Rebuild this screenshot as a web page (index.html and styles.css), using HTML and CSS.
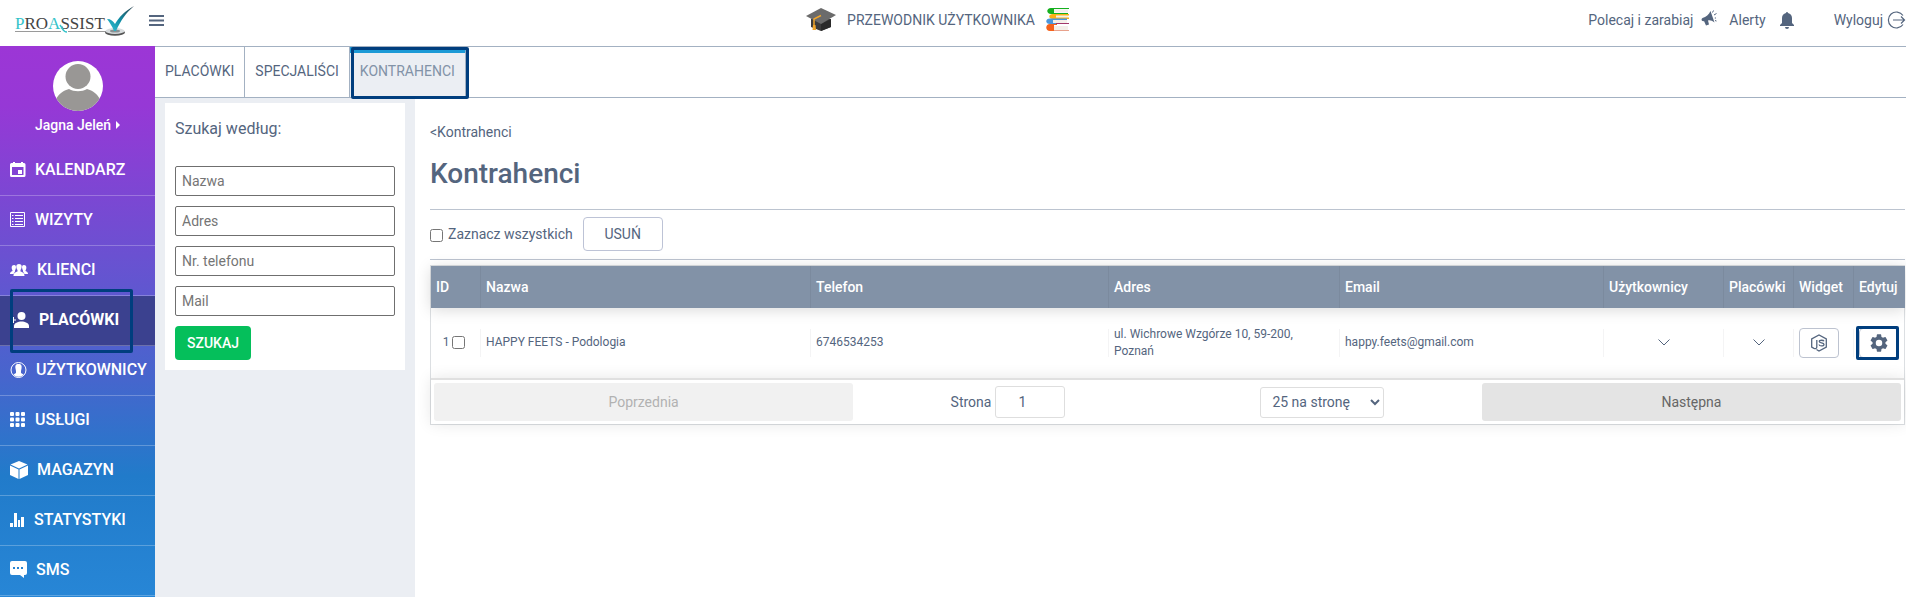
FILE: index.html
```html
<!DOCTYPE html>
<html lang="pl">
<head>
  <meta charset="UTF-8" />
  <title>ProAssist - Kontrahenci</title>
  <meta name="viewport" content="width=device-width, initial-scale=1.0" />
  <link rel="stylesheet" href="styles.css">
</head>
<body>
  <!-- Header -->
  <header class="topbar">
    <div class="topbar-left">
      <a class="logo" href="#" aria-label="ProAssist">
        <svg width="122" height="36" viewBox="0 0 122 36">
          <defs>
            <linearGradient id="check" x1="0" y1="1" x2="1" y2="0">
              <stop offset="0" stop-color="#35c3d6" />
              <stop offset="0.45" stop-color="#0f8ea6" />
              <stop offset="1" stop-color="#33424c" />
            </linearGradient>
          </defs>
          <text class="logo-text" x="3" y="26"><tspan class="logo-accent">P</tspan>RO<tspan class="logo-accent">A</tspan>SSIST</text>
          <path d="M3 28.500h46M56 28.500h38" stroke="#9a9a9a" fill="none" />
          <path d="M48 22c3 4 3 7 7 7" stroke="#35c3c9" stroke-width="1.500" fill="none" />
          <ellipse cx="103" cy="29.500" rx="10" ry="3.200" fill="#555" />
          <ellipse cx="103" cy="28" rx="9.500" ry="3" fill="#d8dcde" />
          <ellipse cx="103" cy="28" rx="5" ry="1.500" fill="#8b9194" />
          <path d="M95 16c4 0 6 2 8 5 4-7 10-13 19-18-8 7-13 14-18 25h-2c-2-5-4-8-7-12z" fill="url(#check)" />
        </svg>
      </a>
      <button class="icon-btn" type="button" aria-label="Menu">
        <svg width="16" height="12" viewBox="0 0 16 12"><path d="M0 1h15M0 5.500h15M0 10h15" stroke="#54657e" stroke-width="2" /></svg>
      </button>
    </div>

    <a class="guide" href="#">
      <svg width="30" height="24" viewBox="0 0 30 24">
        <path d="M5 11v8l10 4 10-4v-8z" fill="#3b3b3b" />
        <path d="M15 16v7l10-4v-8z" fill="#2a2a2a" />
        <path d="M15 0l15 7-15 9L0 8z" fill="#6b6b6b" />
        <path d="M15 7.500L8 11v8" stroke="#f0a52b" stroke-width="1.500" fill="none" />
        <path d="M7 17h2.500l.5 5H6.500z" fill="#f0a52b" />
      </svg>
      <span>PRZEWODNIK UŻYTKOWNIKA</span>
      <svg width="24" height="24" viewBox="0 0 24 24">
        <path d="M8 1.500h14v3H8zM10 7.500h12v2H10zM7 12h14v3H7zM8 18h14v4H8z" fill="#f4efe9" />
        <path d="M5 0h18v1H8v4h14v1H5C0 6 0 0 5 0z" fill="#15b01f" />
        <path d="M7 6h16v1.500H10v2h13V11H7C2 11 2 6 7 6z" fill="#fbb016" />
        <path d="M4 10.500h17V12H7v3h4v1H4c-5 0-5-5.500 0-5.500z" fill="#4c97dc" />
        <path d="M4 16h7v1H8v6H4c-5 0-5-7 0-7z" fill="#f5621c" />
        <path d="M10 15.500h13" stroke="#a2386b" />
        <path d="M8 22.500h15" stroke="#e8a28c" />
      </svg>
    </a>

    <nav class="topbar-right">
      <a class="top-link top-refer" href="#">Polecaj i zarabiaj
        <svg class="raised" width="16" height="17" viewBox="0 0 16 17">
          <path d="M9.500 1l4 11.500C11 10.500 9 10 7 10.500l1 4-3 1-2-4.500C1 12-.5 9 1.500 8c3.500-1.200 6.500-3 8-7z" fill="#54657e" />
          <path d="M11.500 2.500l1-2M13 5l2.500-1.500M13.800 8h1.200M14 10.500l1.500.5" stroke="#54657e" fill="none" />
        </svg>
      </a>
      <a class="top-link top-alerts" href="#">Alerty
        <svg width="16" height="17" viewBox="0 0 16 17"><path d="M7 1a1 1 0 0 1 2 0c2.500.6 4 2.500 4 5v5l2 2v1H1v-1l2-2V6c0-2.500 1.500-4.400 4-5zM6 15h4a2 2 0 0 1-4 0z" fill="#54657e" /></svg>
      </a>
      <a class="top-link top-logout" href="#">Wyloguj
        <svg width="19" height="18" viewBox="0 0 19 18"><path d="M16 4.500A8 8 0 1 0 16 13.500M6 9h12M14 5.500L17.500 9 14 12.500" fill="none" stroke="#54657e" stroke-width="1.200" /></svg>
      </a>
    </nav>
  </header>

  <div class="layout">
    <!-- Sidebar -->
    <aside class="sidebar">
      <a class="profile" href="#">
        <svg width="50" height="50" viewBox="0 0 50 50">
          <defs><clipPath id="avatar"><circle cx="25" cy="25" r="25" /></clipPath></defs>
          <g clip-path="url(#avatar)">
            <rect width="50" height="50" fill="#fff" />
            <circle cx="25" cy="15.500" r="12.500" fill="#999795" />
            <path d="M3 38c3-5 7-8.500 13-10 5 3 13 3 18 0 6 1.500 10 5 13 10v12H3z" fill="#999795" />
          </g>
        </svg>
        <span class="profile-name">Jagna Jeleń
          <svg width="4" height="8" viewBox="0 0 4 8"><path d="M0 0l4 4-4 4z" fill="#fff" /></svg>
        </span>
      </a>
      <nav class="menu">
        <a class="menu-item" href="#">
          <svg width="16" height="16" viewBox="0 0 16 16"><path fill-rule="evenodd" d="M2 1h1V0h2v1h6V0h2v1h1a1.500 1.500 0 0 1 1.500 1.500v11A1.500 1.500 0 0 1 14 15H1.500A1.500 1.500 0 0 1 0 13.500v-11A1.500 1.500 0 0 1 1.500 1zM2 5v8h11.500V5zM8 8h4v4H8z" fill="#fff" /></svg>
          <span>KALENDARZ</span>
        </a>
        <a class="menu-item" href="#">
          <svg width="16" height="16" viewBox="0 0 16 16"><path d="M.5.5h14v14H.5zM5 3.500h8M5 6.500h8M5 9.500h8M5 12.500h8M2 3.500h1.500M2 6.500h1.500M2 9.500h1.500M2 12.500h1.500" fill="none" stroke="#fff" /></svg>
          <span>WIZYTY</span>
        </a>
        <a class="menu-item" href="#">
          <svg width="18" height="12" viewBox="0 0 18 12">
            <g fill="#fff">
              <path d="M4 1c2 0 2.500 2 1.500 4.500L5 6.500v1L3.500 10H0C0 8 1 8 2.500 7v-.5C1 4 1.500 1 4 1zM14 1c-2 0-2.500 2-1.500 4.500l.5 1v1l1.500 2.500H18c0-2-1-2-2.500-3v-.5C17 4 16.500 1 14 1z" />
              <path d="M9 0c3 0 3.500 3 1.500 6v1.500C13 8.500 14.500 9 14.500 12h-11c0-3 1.500-3.500 4-4.500V6C5.500 3 6 0 9 0z" />
            </g>
          </svg>
          <span>KLIENCI</span>
        </a>
        <a class="menu-item active" href="#">
          <svg width="20" height="16" viewBox="0 0 20 16"><circle cx="11.500" cy="4" r="4" fill="#fff" /><path d="M4 16v-2c0-3 4-4.500 7.500-4.500S19 11 19 14v2z" fill="#fff" /><path d="M3.500 5v6M1 8h5" stroke="#fff" /></svg>
          <span>PLACÓWKI</span>
        </a>
        <a class="menu-item" href="#">
          <svg width="17" height="16" viewBox="0 0 17 16"><circle cx="8.500" cy="8" r="7.500" fill="none" stroke="#fff" /><path d="M8.500 2c3 0 3.500 2 3 4.500L11 9v2l2.500 1.500c-2.500 3-7.500 3-10 0L6 11V9l-.5-2.500C5 4 5.500 2 8.500 2z" fill="#fff" /></svg>
          <span>UŻYTKOWNICY</span>
        </a>
        <a class="menu-item" href="#">
          <svg width="16" height="16" viewBox="0 0 16 16"><g fill="#fff"><rect width="4" height="4" rx="1" /><rect x="5.500" width="4" height="4" rx="1" /><rect x="11" width="4" height="4" rx="1" /><rect y="5.500" width="4" height="4" rx="1" /><rect x="5.500" y="5.500" width="4" height="4" rx="1" /><rect x="11" y="5.500" width="4" height="4" rx="1" /><rect y="11" width="4" height="4" rx="1" /><rect x="5.500" y="11" width="4" height="4" rx="1" /><rect x="11" y="11" width="4" height="4" rx="1" /></g></svg>
          <span>USŁUGI</span>
        </a>
        <a class="menu-item" href="#">
          <svg width="18" height="18" viewBox="0 0 18 18"><path d="M9 0l8.500 3.500L9 7.500.5 3.500zM0 4.500L8.500 8.500V18L0 14zM18 4.500L9.500 8.500V18l8.500-4z" fill="#fff" /></svg>
          <span>MAGAZYN</span>
        </a>
        <a class="menu-item" href="#">
          <svg width="15" height="14" viewBox="0 0 15 14"><path d="M0 10h3v4H0zM4 0h3v14H4zM8 7h2v7H8zM11 4h3v10h-3z" fill="#fff" /></svg>
          <span>STATYSTYKI</span>
        </a>
        <a class="menu-item" href="#">
          <svg width="17" height="17" viewBox="0 0 17 17"><path fill-rule="evenodd" d="M2 0h13a2 2 0 0 1 2 2v10a2 2 0 0 1-2 2h-1v3l-4-3H2a2 2 0 0 1-2-2V2a2 2 0 0 1 2-2zM3 6v2h2V6zM7 6v2h2V6zM11 6v2h2V6z" fill="#fff" /></svg>
          <span>SMS</span>
        </a>
        <div class="menu-frame"></div>
      </nav>
    </aside>

    <div class="page">
      <nav class="tabs">
        <a class="tab" href="#">PLACÓWKI</a>
        <a class="tab" href="#">SPECJALIŚCI</a>
        <a class="tab tab-active" href="#">KONTRAHENCI</a>
      </nav>

      <div class="columns">
        <!-- Search -->
        <div class="filters">
          <form class="search-card">
            <h2>Szukaj według:</h2>
            <input class="search-input" type="text" placeholder="Nazwa" aria-label="Nazwa">
            <input class="search-input" type="text" placeholder="Adres" aria-label="Adres">
            <input class="search-input" type="text" placeholder="Nr. telefonu" aria-label="Nr. telefonu">
            <input class="search-input" type="text" placeholder="Mail" aria-label="Mail">
            <button class="search-btn" type="button">SZUKAJ</button>
          </form>
        </div>

        <!-- List -->
        <main class="content">
          <a class="back" href="#">&lt;Kontrahenci</a>
          <h1>Kontrahenci</h1>
          <div class="actions">
            <input type="checkbox" id="all">
            <label for="all">Zaznacz wszystkich</label>
            <button class="delete-btn" type="button">USUŃ</button>
          </div>

          <div class="grid">
            <table class="grid-table">
              <colgroup>
                <col class="col-id"><col class="col-name"><col class="col-phone"><col class="col-address"><col class="col-email"><col class="col-users"><col class="col-places"><col class="col-widget"><col class="col-edit">
              </colgroup>
              <thead>
                <tr>
                  <th>ID</th><th>Nazwa</th><th>Telefon</th><th>Adres</th><th>Email</th><th>Użytkownicy</th><th>Placówki</th><th>Widget</th><th>Edytuj</th>
                </tr>
              </thead>
              <tbody>
                <tr>
                  <td><div class="row-id"><label for="row1">1</label><input type="checkbox" id="row1"></div></td>
                  <td>HAPPY FEETS - Podologia</td>
                  <td>6746534253</td>
                  <td>ul. Wichrowe Wzgórze 10, 59-200, Poznań</td>
                  <td>happy.feets@gmail.com</td>
                  <td>
                    <button class="expand" type="button" aria-label="Użytkownicy"><svg width="12" height="7" viewBox="0 0 12 7"><path d="M.5.5L6 6 11.500.5" fill="none" stroke="#54657e" /></svg></button>
                  </td>
                  <td>
                    <button class="expand" type="button" aria-label="Placówki"><svg width="12" height="7" viewBox="0 0 12 7"><path d="M.5.5L6 6 11.500.5" fill="none" stroke="#54657e" /></svg></button>
                  </td>
                  <td>
                    <button class="tool-btn" type="button" aria-label="Widget">
                      <svg width="16" height="18" viewBox="0 0 16 18"><path d="M5.500 15.500L8 17l7.300-4V5L8 1 .7 5v8L3 14.300c1.500.7 2.800.2 2.800-1.300V6M13 7.200C12.500 6 8.300 5.700 8.300 7.500c0 2 4.700.8 4.700 3 0 2-4.700 1.800-5 0" fill="none" stroke="#54657e" stroke-width="1.300" /></svg>
                    </button>
                  </td>
                  <td>
                    <button class="tool-btn edit-btn" type="button" aria-label="Edytuj">
                      <svg width="18" height="18" viewBox="2 2 20 20"><path d="M19.140 12.940c.04-.3.06-.61.06-.94s-.02-.64-.07-.94l2.030-1.580a.49.49 0 0 0 .12-.61l-1.920-3.320a.49.49 0 0 0-.59-.22l-2.390.96a7 7 0 0 0-1.620-.94l-.36-2.540A.48.48 0 0 0 13.920 2.400h-3.840a.48.48 0 0 0-.47.41l-.36 2.540a7 7 0 0 0-1.620.94l-2.390-.96a.48.48 0 0 0-.59.22L2.740 8.870a.48.48 0 0 0 .12.61l2.030 1.580a6 6 0 0 0 0 1.880l-2.030 1.580a.49.49 0 0 0-.12.61l1.920 3.320c.12.22.37.29.59.22l2.390-.96a7 7 0 0 0 1.620.94l.36 2.540c.05.24.24.41.48.41h3.840c.24 0 .44-.17.47-.41l.36-2.540a7 7 0 0 0 1.620-.94l2.390.96c.22.08.47 0 .59-.22l1.920-3.320a.48.48 0 0 0-.12-.61zM12 15.600a3.600 3.600 0 1 1 0-7.200 3.600 3.600 0 0 1 0 7.200z" fill="#54657e" /></svg>
                    </button>
                  </td>
                </tr>
              </tbody>
            </table>

            <div class="pagination">
              <button class="page-btn" type="button" disabled>Poprzednia</button>
              <div class="page-center">
                <div class="page-jump">
                  <label for="page">Strona</label>
                  <input class="page-input" id="page" type="text" value="1">
                </div>
                <select class="page-size" aria-label="Liczba na stronę">
                  <option>25 na stronę</option>
                  <option>50 na stronę</option>
                </select>
              </div>
              <button class="page-btn" type="button">Następna</button>
            </div>
          </div>
        </main>
      </div>
    </div>
  </div>
</body>
</html>
```
FILE: styles.css
```css
/* Base */
* { box-sizing: border-box; }
body {
  margin: 0;
  min-height: 100vh;
  display: flex;
  flex-direction: column;
  overflow-x: hidden;
  font-family: Roboto, "Liberation Sans", sans-serif;
  font-size: 14px;
  line-height: 20px;
  color: #54657e;
  background: #fff;
}
a { color: inherit; text-decoration: none; }
button, input, select { font-family: inherit; font-size: 14px; color: inherit; }
button { cursor: pointer; }
svg { display: block; flex: none; }
input[type="checkbox"] { width: 13px; height: 13px; margin: 0; }

/* Header */
.topbar {
  display: grid;
  grid-template-columns: 1fr auto 1fr;
  height: 47px;
  border-bottom: 1px solid #a3b1c2;
}
.topbar-left { display: flex; align-items: flex-start; gap: 15px; padding: 3px 0 0 12px; }
.logo-text { font-family: "Liberation Serif", serif; font-size: 17px; fill: #444; }
.logo-accent { fill: #35c3c9; }
.icon-btn { padding: 0; margin-top: 12px; border: 0; background: none; }
.guide { display: flex; align-items: center; gap: 11px; padding: 0 30px 6px 0; }
.topbar-right {
  display: flex;
  align-items: center;
  justify-content: flex-end;
  gap: 12px;
  padding-bottom: 6px;
}
.top-link { display: flex; align-items: center; gap: 10px; }
.top-refer { gap: 8px; }
.raised { margin-bottom: 4px; }
.top-alerts { gap: 13px; }
.top-logout { gap: 4px; margin-left: 27px; }

.layout { flex: 1; display: flex; }

/* Sidebar */
.sidebar {
  width: 155px;
  flex: none;
  margin-top: -1px;
  background: linear-gradient(180deg, #9c36d6 0, #9638d6 60px, #4765cd 330px, #217bca 430px, #2786d6 550px);
  color: #fff;
}
.profile {
  display: flex;
  flex-direction: column;
  align-items: center;
  gap: 4px;
  height: 100px;
  padding-top: 15px;
}
.profile-name { display: flex; align-items: center; gap: 5px; font-weight: 500; }
.menu { position: relative; }
.menu-item {
  display: flex;
  align-items: center;
  gap: 9px;
  height: 50px;
  padding: 0 10px 2px;
  border-bottom: 1px solid rgba(255, 255, 255, 0.25);
  font-size: 16px;
  font-weight: 500;
}
.active { background: #3b418f; font-weight: 700; }
.menu-frame {
  position: absolute;
  top: 143px;
  left: 10px;
  width: 123px;
  height: 64px;
  border: 3px solid #003e7e;
  border-radius: 2px;
}

/* Tabs */
.page { flex: 1; min-width: 0; display: flex; flex-direction: column; }
.tabs { display: flex; height: 51px; border-bottom: 1px solid #a3b1c2; }
.tab { padding: 14px 10px 0; border-right: 1px solid #a3b1c2; }
.tab-active {
  position: relative;
  padding-top: 8px;
  border-top: 6px solid #1c9ad6;
  background: #ebeef3;
  color: #8292a7;
}
.tab-active::after {
  content: "";
  position: absolute;
  inset: -6px -4px -2px 1px;
  border: 3px solid #003e7e;
  border-radius: 2px;
}
.columns { flex: 1; display: flex; }

/* Search */
.filters { width: 260px; flex: none; padding: 5px 10px; background: #ebeef3; }
.search-card {
  display: flex;
  flex-direction: column;
  align-items: flex-start;
  gap: 10px;
  padding: 16px 10px 10px;
  background: #fff;
}
.search-card h2 { margin: 0 0 17px; font-size: 16px; font-weight: 400; }
.search-input {
  width: 100%;
  height: 30px;
  padding: 0 6px 1px;
  border: 1px solid #6f6f6f;
  border-radius: 2px;
}
.search-input::placeholder { color: #757575; }
.search-btn {
  height: 34px;
  padding: 0 12px;
  border: 0;
  border-radius: 4px;
  background: #05bf5b;
  color: #fff;
  font-weight: 500;
}

/* List */
.content { flex: 1; min-width: 0; padding: 24px 1px 0 15px; }
.back { display: block; }
h1 { margin: 16px 0 19px; font-size: 28px; line-height: 32px; font-weight: 500; }
.actions {
  display: flex;
  align-items: center;
  height: 51px;
  margin-bottom: 5px;
  padding-bottom: 2px;
  border-top: 1px solid #bcc4d0;
  border-bottom: 1px solid #bcc4d0;
}
.actions input { margin: 4px 5px 0 0; }
.delete-btn {
  width: 80px;
  height: 34px;
  margin-left: 10px;
  border: 1px solid #bdc3d6;
  border-radius: 4px;
  background: #fff;
}

.grid { border: 1px solid #dcdfe2; }
.grid-table { width: 100%; table-layout: fixed; border-collapse: separate; border-spacing: 0; }
.col-id { width: 50px; }
.col-name { width: 330px; }
.col-phone { width: 298px; }
.col-address { width: 231px; }
.col-email { width: 264px; }
.col-users { width: 120px; }
.col-places { width: 70px; }
.col-widget { width: 60px; }
.col-edit { width: 51px; }
.grid-table thead { box-shadow: 0 2px 15px rgba(0, 0, 0, 0.15); }
.grid-table th {
  height: 42px;
  padding: 0 5px;
  border-right: 1px solid #7b8a9e;
  background: #8292a7;
  color: #fff;
  font-weight: 500;
  text-align: left;
}
.grid-table td {
  height: 70px;
  padding: 0 5px 1px;
  background: linear-gradient(#f4f4f5, #f4f4f5) right / 1px 28px no-repeat;
  font-size: 12px;
  line-height: 17px;
}
.grid-table th:last-child { border-right: 0; }
.grid-table td:last-child { background: none; }
.row-id { display: flex; align-items: center; justify-content: center; gap: 3px; padding-right: 4px; }
.expand { display: block; margin: 0 auto; padding: 0; border: 0; background: none; }
.tool-btn {
  position: relative;
  display: flex;
  align-items: center;
  justify-content: center;
  width: 40px;
  height: 30px;
  padding: 0;
  border: 1px solid #bdc3d0;
  border-radius: 4px;
  background: #fff;
}
.edit-btn::after {
  content: "";
  position: absolute;
  inset: -3px -1px -3px -4px;
  border: 3px solid #003e7e;
  border-radius: 2px;
}

/* Pagination */
.pagination {
  display: flex;
  align-items: center;
  height: 46px;
  padding: 0 3px;
  border-top: 2px solid #e0e0e0;
  box-shadow: 0 0 15px rgba(0, 0, 0, 0.1);
}
.page-btn {
  flex: 2;
  height: 38px;
  padding: 0;
  border: 0;
  border-radius: 3px;
  background: #e4e4e4;
  color: #666;
}
.page-btn:disabled { background: #f1f1f1; color: #b2b2b2; }
.page-center { flex: 3; display: flex; align-items: center; justify-content: space-around; }
.page-jump { display: flex; align-items: center; gap: 4px; }
.page-input {
  width: 70px;
  height: 32px;
  padding: 0 16px 0 0;
  border: 1px solid #dedede;
  border-radius: 3px;
  text-align: center;
}
.page-size {
  width: 124px;
  height: 31px;
  padding: 0 7px;
  border: 1px solid #dedede;
  border-radius: 3px;
  background: #fff;
}
```
